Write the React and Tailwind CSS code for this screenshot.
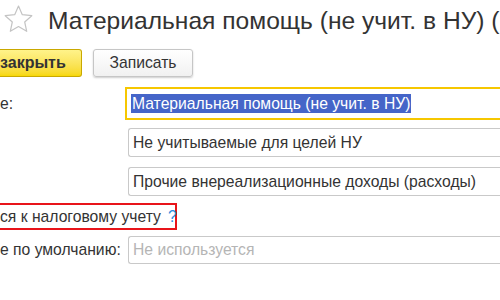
export default function App() {
    return (
        <div className="w-[500px] h-[300px] overflow-hidden bg-white text-[#333] font-['Liberation_Sans',Arial,sans-serif]">
            {/* TITLE */}
            <div className="flex items-start h-[49px] whitespace-nowrap">
                <svg className="ml-[3px] mt-[5px] shrink-0" width="31" height="30" viewBox="0 0 30 30">
                    <polygon
                        points="15,1 18.8,9.7 28.3,10.7 21.2,17 23.2,26.3 15,21.5 6.8,26.3 8.8,17 1.7,10.7 11.2,9.7"
                        fill="none"
                        stroke="#c4c4c4"
                        strokeWidth="1.2"
                        strokeLinejoin="round"
                    />
                </svg>
                <h1 className="ml-[14px] mt-[8px] text-[24.6px] leading-[25px] text-[#333]">
                    Материальная помощь (не учит. в НУ) (Статьи доходов и расходов)
                </h1>
            </div>

            {/* BUTTONS */}
            <div className="flex gap-[11px] h-[28px]">
                <button className="w-[82px] h-[28px] rounded-r-[3px] border border-l-0 border-[#c9a800] bg-gradient-to-b from-[#fff38a] to-[#f7d800] text-left text-[16px] font-bold text-[#333] whitespace-nowrap overflow-hidden">
                    закрыть
                </button>
                <button className="w-[100px] h-[28px] rounded-[3px] border border-[#c6c6c6] bg-gradient-to-b from-white to-[#f1f1f1] shadow-[0_1px_2px_rgba(0,0,0,0.2)] text-[15.7px] text-[#333]">
                    Записать
                </button>
            </div>

            {/* FIELDS */}
            <div className="mt-[10px] flex flex-col text-[15.7px] whitespace-nowrap">
                <div className="flex items-center h-[33px]">
                    <span className="w-[125px] shrink-0">е:</span>
                    <div className="flex-1 h-[33px] border-2 border-r-0 border-[#f6c700] flex items-center pl-[4px]">
                        <span className="bg-[#4565c8] text-white leading-[19px] px-[1px]">
                            Материальная помощь (не учит. в НУ)
                        </span>
                    </div>
                </div>

                <div className="flex items-center h-[29px] mt-[8px]">
                    <span className="w-[128px] shrink-0"></span>
                    <div className="flex-1 h-[29px] rounded-l-[3px] border border-r-0 border-[#c9c9c9] flex items-center pl-[4px]">
                        Не учитываемые для целей НУ
                    </div>
                </div>

                <div className="flex items-center h-[29px] mt-[10px]">
                    <span className="w-[128px] shrink-0"></span>
                    <div className="flex-1 h-[29px] rounded-l-[3px] border border-r-0 border-[#c9c9c9] flex items-center pl-[4px]">
                        Прочие внереализационные доходы (расходы)
                    </div>
                </div>

                <div className="mt-[7px] flex">
                    <div className="w-[177px] h-[27px] border-2 border-l-0 border-[#e8141a] flex items-center">
                        <span>ся к налоговому учету</span>
                        <span className="ml-[7px] text-[#2b8de0]">?</span>
                    </div>
                </div>

                <div className="flex items-center h-[28px] mt-[6px]">
                    <span className="w-[128px] shrink-0">е по умолчанию:</span>
                    <div className="flex-1 h-[28px] rounded-l-[3px] border border-r-0 border-[#c9c9c9] flex items-center pl-[4px] text-[#b5b5b5]">
                        Не используется
                    </div>
                </div>
            </div>
        </div>
    );
}
